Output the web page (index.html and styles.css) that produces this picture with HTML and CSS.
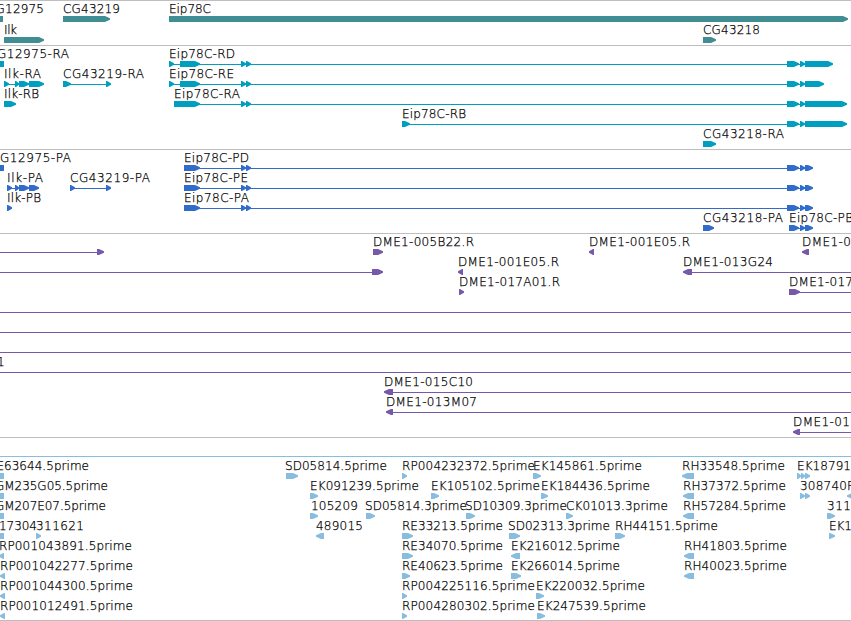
FILE: index.html
```html
<!DOCTYPE html>
<html lang="en">
  <head>
    <meta charset="UTF-8" />
    <title>Eip78C region</title>
    <link rel="stylesheet" href="styles.css">
  </head>
  <body>
    <main class="browser" id="browser"></main>
    <script src="tracks.js"></script>
  </body>
</html>
```
FILE: styles.css
```css
body {
  margin: 0;
  background: #fff;
  overflow: hidden;
}

.browser {
  display: flex;
  flex-direction: column;
  width: 851px;
  height: 621px;
  overflow: hidden;
  border-bottom: 1px solid #bebebe;
  box-sizing: border-box;
}

.track {
  display: flex;
  flex-direction: column;
  border-top: 1px solid #bebebe;
  padding-bottom: 3px;
}

.row {
  display: block;
  width: 851px;
  height: 20px;
  overflow: visible;
}

.label {
  font-family: "DejaVu Sans", sans-serif;
  font-size: 12px;
  font-weight: 200;
  fill: #000;
  stroke: #000;
  stroke-width: 0.25px;
}

.genes {
  color: #408e93;
  padding-bottom: 2px;
}

.genes .row {
  height: 21px;
}

.transcripts {
  color: #009fc0;
}

.proteins {
  color: #316ccb;
}

.clones {
  color: #7758a9;
}

.ests {
  color: #88bde0;
  padding-bottom: 2px;
}

.exon,
.intron {
  fill: currentColor;
}
```
FILE: tracks.js
```js
// label: [text, x, width]
// exon: [start, end], a third value of -1 is the reverse strand
// line: [start, end]
const tail = [[787, 799], [800, 805]];
const mid = [[241, 246], [246, 251]];

const tracks = [
  {
    name: "genes",
    rows: [
      {
        labels: [["CG12975", -13, 57], ["CG43219", 63, 57], ["Eip78C", 169, 42]],
        exons: [[-20, 3, -1], [63, 110], [169, 848]],
      },
      {
        labels: [["Ilk", 4, 13], ["CG43218", 703, 57]],
        exons: [[4, 44], [703, 716]],
      },
    ],
  },
  {
    name: "transcripts",
    rows: [
      {
        labels: [["CG12975-RA", -12, 81], ["Eip78C-RD", 169, 66]],
        lines: [[169, 830]],
        exons: [[-9, 4, -1], [169, 174], [180, 200], ...mid, ...tail, [805, 833]],
      },
      {
        labels: [["Ilk-RA", 4, 37], ["CG43219-RA", 63, 81], ["Eip78C-RE", 169, 65]],
        lines: [[4, 40], [63, 108], [169, 820]],
        exons: [[4, 9], [15, 19], [19, 29], [29, 44], [63, 71], [106, 111],
          [169, 174], [180, 200], ...mid, ...tail, [805, 824]],
      },
      {
        labels: [["Ilk-RB", 4, 35], ["Eip78C-RA", 174, 66]],
        lines: [[174, 840]],
        exons: [[4, 16], [174, 200], ...mid, ...tail, [805, 847]],
      },
      {
        labels: [["Eip78C-RB", 402, 64]],
        lines: [[402, 840]],
        exons: [[402, 410], ...tail, [805, 847]],
      },
      {
        labels: [["CG43218-RA", 703, 81]],
        exons: [[703, 716]],
      },
    ],
  },
  {
    name: "proteins",
    rows: [
      {
        labels: [["CG12975-PA", -9, 80], ["Eip78C-PD", 184, 65]],
        lines: [[184, 810]],
        exons: [[-9, 4, -1], [184, 200], ...mid, ...tail, [805, 813]],
      },
      {
        labels: [["Ilk-PA", 7, 36], ["CG43219-PA", 70, 80], ["Eip78C-PE", 184, 64]],
        lines: [[7, 36], [70, 108], [184, 810]],
        exons: [[7, 12], [15, 19], [19, 29], [29, 39], [70, 75], [106, 111],
          [184, 200], ...mid, ...tail, [805, 813]],
      },
      {
        labels: [["Ilk-PB", 7, 34], ["Eip78C-PA", 184, 65]],
        lines: [[184, 810]],
        exons: [[7, 12], [184, 200], ...mid, ...tail, [805, 813]],
      },
      {
        labels: [["CG43218-PA", 703, 80], ["Eip78C-PB", 789, 64]],
        lines: [[789, 810]],
        exons: [[703, 714], [789, 799], [800, 805], [805, 813]],
      },
    ],
  },
  {
    name: "clones",
    rows: [
      {
        labels: [["DME1-005B22.R", 373, 101], ["DME1-001E05.R", 589, 101], ["DME1-0", 802, 49]],
        lines: [[0, 100]],
        exons: [[97, 104], [373, 383], [589, 594, -1], [802, 809, -1]],
      },
      {
        labels: [["DME1-001E05.R", 458, 101], ["DME1-013G24", 683, 90]],
        lines: [[0, 376], [686, 851]],
        exons: [[372, 383], [458, 463, -1], [683, 692, -1]],
      },
      {
        labels: [["DME1-017A01.R", 459, 101], ["DME1-017", 789, 64]],
        lines: [[789, 851]],
        exons: [[459, 464], [789, 800]],
      },
      { lines: [[0, 851]] },
      { lines: [[0, 851]] },
      { lines: [[0, 851]] },
      { labels: [["1", -3, 8]], lines: [[0, 851]] },
      {
        labels: [["DME1-015C10", 384, 89]],
        lines: [[387, 851]],
        exons: [[384, 393, -1]],
      },
      {
        labels: [["DME1-013M07", 386, 91]],
        lines: [[389, 851]],
        exons: [[386, 393, -1]],
      },
      {
        labels: [["DME1-01", 793, 57]],
        lines: [[796, 851]],
        exons: [[793, 800, -1]],
      },
    ],
  },
  {
    name: "ests",
    rows: [
      { lines: [[0, 851]] },
      {
        labels: [["RE63644.5prime", -12, 101], ["SD05814.5prime", 285, 102],
          ["RP004232372.5prime", 402, 133], ["EK145861.5prime", 533, 109],
          ["RH33548.5prime", 682, 103], ["EK18791", 797, 54]],
        exons: [[-6, 4, -1], [286, 298], [402, 407], [533, 541], [682, 694, -1],
          [797, 801], [801, 805], [805, 810]],
      },
      {
        labels: [["GM235G05.5prime", -5, 113], ["EK091239.5prime", 310, 109],
          ["EK105102.5prime", 431, 109], ["EK184436.5prime", 541, 109],
          ["RH37372.5prime", 683, 103], ["308740", 800, 47], ["R", 847, 8]],
        exons: [[-6, 4, -1], [310, 318], [431, 439], [541, 548], [683, 694, -1],
          [800, 805], [805, 810], [847, 856, -1]],
      },
      {
        labels: [["GM207E07.5prime", -5, 111], ["105209", 311, 47],
          ["SD05814.3prime", 365, 102], ["SD10309.3prime", 465, 102],
          ["CK01013.3prime", 566, 102], ["RH57284.5prime", 683, 103], ["311", 827, 24]],
        exons: [[-6, 4, -1], [310, 318], [366, 375], [466, 475], [566, 573],
          [683, 694, -1], [827, 835]],
      },
      {
        labels: [["17304", -1, 38], ["311621", 36, 48], ["489015", 316, 47],
          ["RE33213.5prime", 402, 101], ["SD02313.3prime", 508, 102],
          ["RH44151.5prime", 615, 103], ["EK1", 829, 23]],
        exons: [[-6, 4, -1], [36, 41], [316, 324, -1], [402, 413], [509, 520],
          [615, 625], [829, 835]],
      },
      {
        labels: [["RP001043891.5prime", -1, 133], ["RE34070.5prime", 402, 101],
          ["EK216012.5prime", 511, 109], ["RH41803.5prime", 684, 103]],
        exons: [[-1, 4, -1], [402, 413], [511, 520, -1], [684, 694, -1]],
      },
      {
        labels: [["RP001042277.5prime", 0, 133], ["RE40623.5prime", 402, 101],
          ["EK266014.5prime", 511, 109], ["RH40023.5prime", 684, 103]],
        exons: [[0, 5, -1], [402, 410], [511, 521], [684, 694, -1]],
      },
      {
        labels: [["RP001044300.5prime", 0, 133], ["RP004225116.5prime", 402, 133],
          ["EK220032.5prime", 536, 109]],
        exons: [[0, 5, -1], [402, 407], [536, 544]],
      },
      {
        labels: [["RP001012491.5prime", 0, 133], ["RP004280302.5prime", 402, 133],
          ["EK247539.5prime", 537, 109]],
        exons: [[0, 5, -1], [402, 407], [537, 545]],
      },
    ],
  },
];

const NS = "http://www.w3.org/2000/svg";

function add(parent, tag, attrs, text) {
  const el = document.createElementNS(NS, tag);
  for (const key in attrs) el.setAttribute(key, attrs[key]);
  if (text) el.textContent = text;
  parent.appendChild(el);
  return el;
}

// a bar with a pointed end, nearly a triangle when it is short
function arrow(start, end, strand) {
  const head = Math.min(5, end - start - 1);
  const tip = strand === -1 ? start : end;
  const base = strand === -1 ? end : start;
  const neck = strand === -1 ? start + head : end - head;
  return `${base},15 ${neck},15 ${tip},17.2 ${tip},18.8 ${neck},21 ${base},21`;
}

const browser = document.getElementById("browser");

tracks.forEach((track) => {
  const section = document.createElement("section");
  section.className = "track " + track.name;

  track.rows.forEach((row) => {
    const svg = add(section, "svg", { class: "row" });
    (row.lines || []).forEach(([a, b]) =>
      add(svg, "rect", { class: "intron", x: a, y: 18, width: b - a, height: 1 })
    );
    (row.exons || []).forEach(([a, b, strand]) =>
      add(svg, "polygon", { class: "exon", points: arrow(a, b, strand) })
    );
    (row.labels || []).forEach(([text, x, width]) =>
      add(svg, "text", { class: "label", x: x, y: 12, textLength: width }, text)
    );
  });

  browser.appendChild(section);
});
```
